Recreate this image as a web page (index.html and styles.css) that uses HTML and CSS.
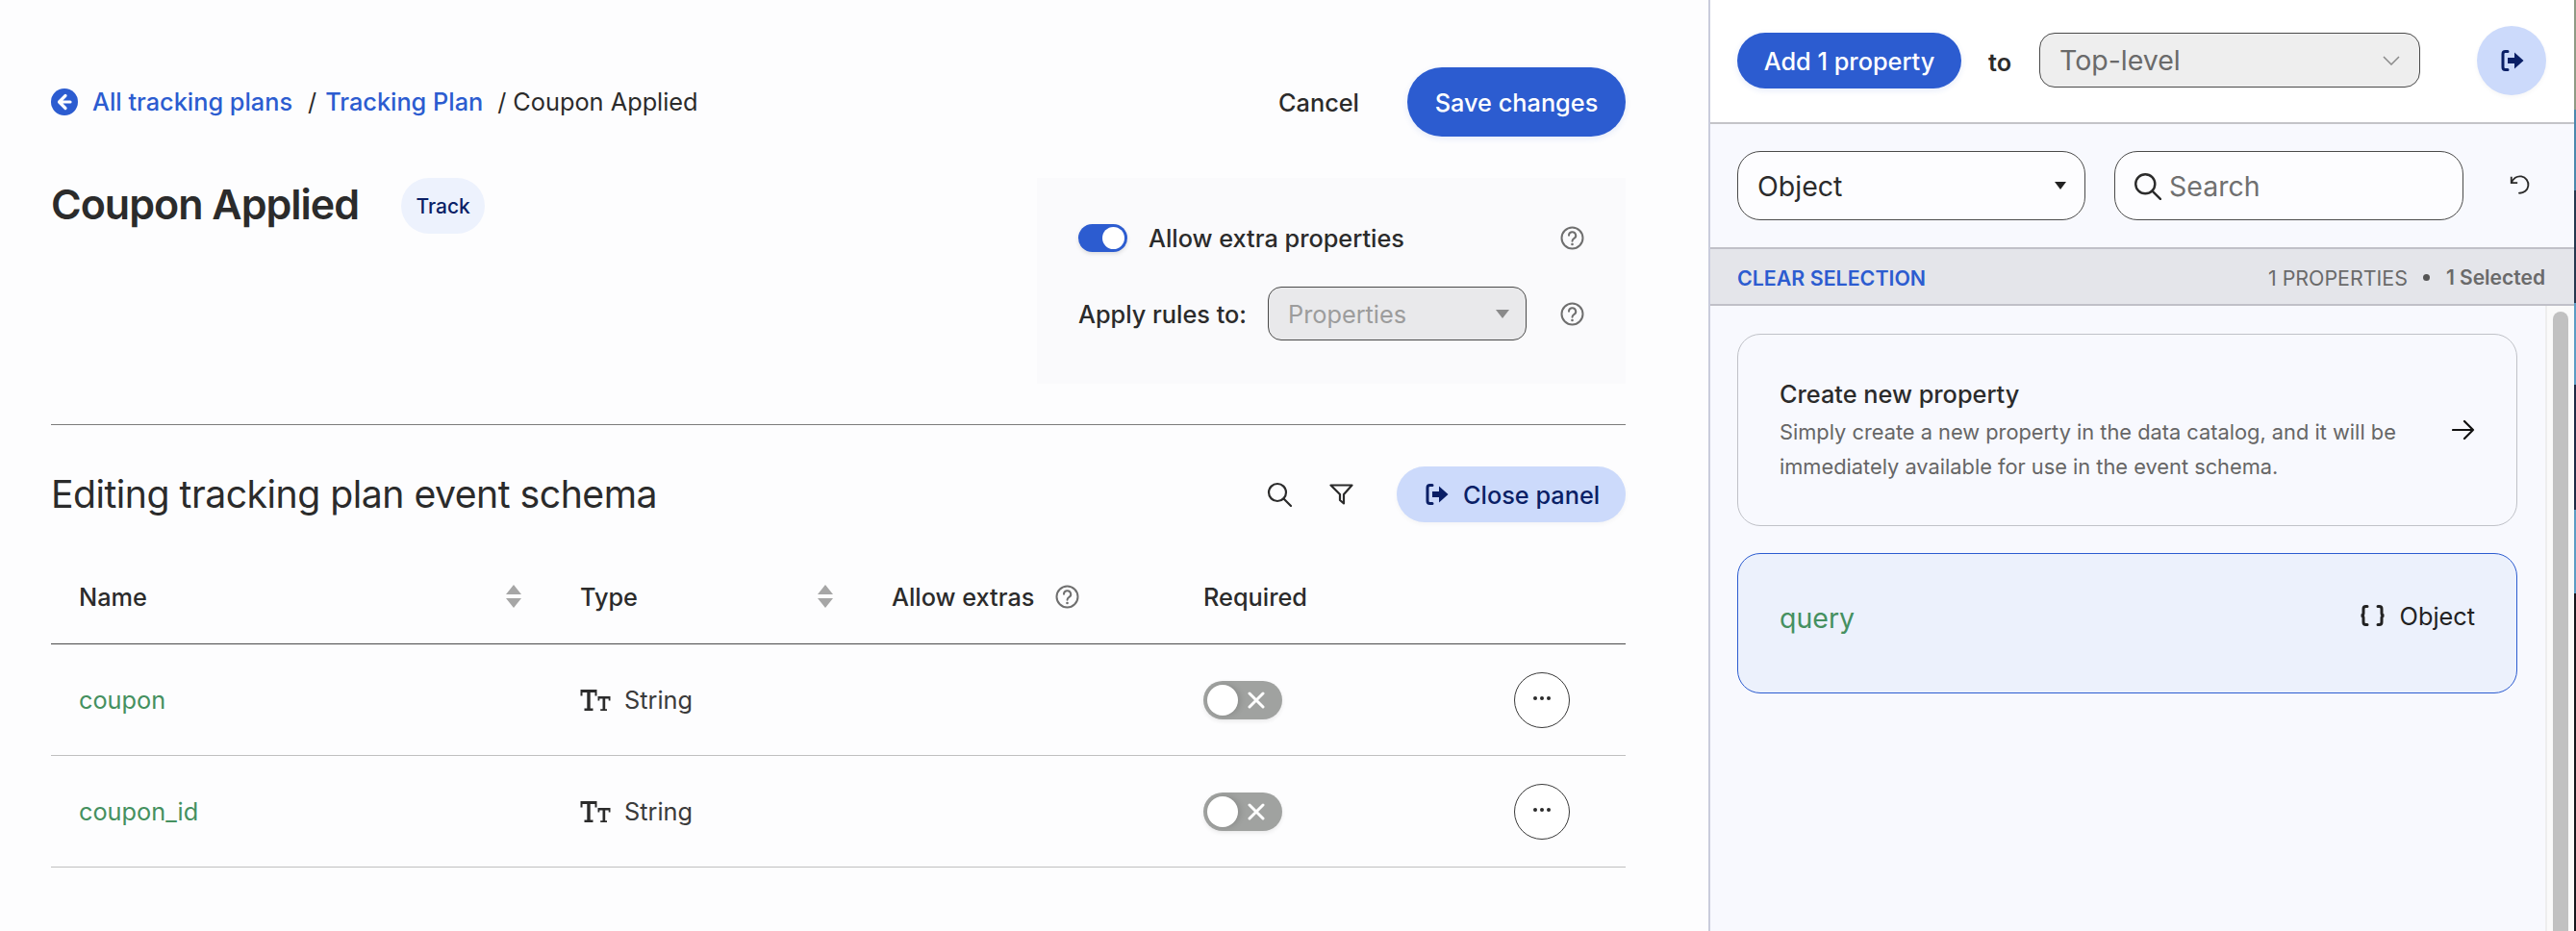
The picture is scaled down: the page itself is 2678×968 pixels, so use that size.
FILE: index.html
```html
<!DOCTYPE html>
<html lang="en">
<head>
<meta charset="utf-8">
<title>Coupon Applied</title>
<link rel="stylesheet" href="styles.css">
</head>
<body>
<svg class="defs" width="0" height="0" aria-hidden="true">
  <symbol id="i-exit" viewBox="0 0 26 26">
    <path d="M9 3.500H6.500A2.500 2.500 0 0 0 4 6v14a2.500 2.500 0 0 0 2.500 2.500H9" fill="none" stroke="currentColor" stroke-width="3" stroke-linecap="round"/>
    <path d="M9 10h7V4.500l9.500 8.500-9.500 8.500V16H9z" fill="currentColor"/>
  </symbol>
  <symbol id="i-help" viewBox="0 0 25 25">
    <circle cx="12.500" cy="12.500" r="11" fill="none" stroke="#6f6f6f" stroke-width="2"/>
    <path d="M9 9.800a3.600 3.600 0 1 1 5.400 3.100c-1.300.8-1.900 1.400-1.900 2.800" fill="none" stroke="#6f6f6f" stroke-width="2" stroke-linecap="round"/>
    <circle cx="12.500" cy="19" r="1.300" fill="#6f6f6f"/>
  </symbol>
  <symbol id="i-search" viewBox="0 0 26 26">
    <circle cx="11" cy="11" r="9" fill="none" stroke="currentColor" stroke-width="2.200"/>
    <path d="M17.500 17.500 25 25" fill="none" stroke="currentColor" stroke-width="2.200" stroke-linecap="round"/>
  </symbol>
  <symbol id="i-sort" viewBox="0 0 16 24">
    <path d="M8 0l8 10H0zM0 14h16L8 24z" fill="#a6a6a6"/>
  </symbol>
  <symbol id="i-type" viewBox="0 0 32 24">
    <path d="M.5 1h17v6.500h-2V4H10.700v16.500H13.500V23H4.500v-2.500H7.300V4H2.500v3.500h-2z" fill="currentColor"/>
    <path d="M18.500 8h13v4.500h-1.800V10.500h-3.500v10.700H28V23h-6.800v-1.800H23.500V10.500h-3.200v2h-1.800z" fill="currentColor"/>
  </symbol>
  <symbol id="i-x" viewBox="0 0 18 18">
    <path d="M2 2l14 14M16 2 2 16" fill="none" stroke="#fff" stroke-width="3" stroke-linecap="round"/>
  </symbol>
</svg>

<main class="main">
  <header class="topbar">
    <nav class="crumbs">
      <svg class="back" viewBox="0 0 28 28" aria-hidden="true"><circle cx="14" cy="14" r="14" fill="#2c5cd0"/><path d="M15 7.500 8.500 14l6.500 6.500M9 14h11" fill="none" stroke="#fff" stroke-width="3.200" stroke-linecap="round" stroke-linejoin="round"/></svg>
      <a class="crumb-link">All tracking plans</a>
      <span class="sep">/</span>
      <a class="crumb-link">Tracking Plan</a>
      <span class="sep sep-last">/</span>
      <span class="crumb-cur">Coupon Applied</span>
    </nav>
    <div class="top-actions">
      <button class="btn-text">Cancel</button>
      <button class="btn-primary btn-save">Save changes</button>
    </div>
  </header>

  <section class="summary">
    <div class="title-wrap">
      <h1 class="title">Coupon Applied</h1>
      <span class="badge">Track</span>
    </div>
    <div class="rules">
      <div class="rule-row">
        <span class="switch-on"><span class="knob-on"></span></span>
        <span class="rule-label">Allow extra properties</span>
        <svg class="help push"><use href="#i-help"/></svg>
      </div>
      <div class="rule-row rule-row-select">
        <span class="apply-label">Apply rules to:</span>
        <div class="select-small"><span>Properties</span><span class="caret-grey"></span></div>
        <svg class="help push"><use href="#i-help"/></svg>
      </div>
    </div>
  </section>

  <hr class="divider">

  <section class="schema-head">
    <h2 class="schema-title">Editing tracking plan event schema</h2>
    <div class="schema-tools">
      <svg class="tool-search"><use href="#i-search"/></svg>
      <svg class="tool-filter" viewBox="0 0 25 22" aria-hidden="true"><path d="M1.500 1.500h22L15 11v9.500l-4-3.500v-6z" fill="none" stroke="currentColor" stroke-width="2.200" stroke-linejoin="round"/></svg>
      <button class="btn-close"><svg class="exit-icon"><use href="#i-exit"/></svg>Close panel</button>
    </div>
  </section>

  <div class="table">
    <div class="row row-head">
      <div class="cell">Name<svg class="sort"><use href="#i-sort"/></svg></div>
      <div class="cell">Type<svg class="sort"><use href="#i-sort"/></svg></div>
      <div class="cell cell-gap">Allow extras<svg class="help"><use href="#i-help"/></svg></div>
      <div class="cell">Required</div>
      <div class="cell"></div>
    </div>
    <div class="row">
      <div class="cell name">coupon</div>
      <div class="cell type"><svg class="type-icon"><use href="#i-type"/></svg>String</div>
      <div class="cell"></div>
      <div class="cell"><span class="switch-off"><span class="knob-off"></span><svg class="x"><use href="#i-x"/></svg></span></div>
      <div class="cell"><button class="more"><span></span><span></span><span></span></button></div>
    </div>
    <div class="row">
      <div class="cell name">coupon_id</div>
      <div class="cell type"><svg class="type-icon"><use href="#i-type"/></svg>String</div>
      <div class="cell"></div>
      <div class="cell"><span class="switch-off"><span class="knob-off"></span><svg class="x"><use href="#i-x"/></svg></span></div>
      <div class="cell"><button class="more"><span></span><span></span><span></span></button></div>
    </div>
  </div>
</main>

<aside class="panel">
  <div class="panel-top">
    <button class="btn-primary btn-add">Add 1 property</button>
    <span class="to">to</span>
    <div class="select-top"><span>Top-level</span><svg class="chev" viewBox="0 0 18 10" aria-hidden="true"><path d="M1 1l8 8 8-8" fill="none" stroke="#8a8a8a" stroke-width="1.500"/></svg></div>
    <button class="btn-round"><svg class="exit-icon"><use href="#i-exit"/></svg></button>
  </div>
  <div class="filters">
    <div class="field"><span class="field-value">Object</span><span class="caret-dark"></span></div>
    <div class="field field-search"><svg class="field-icon"><use href="#i-search"/></svg><span class="placeholder">Search</span></div>
    <svg class="reset" viewBox="0 0 24 24" aria-hidden="true"><path d="M3 3v7h7" fill="none" stroke="currentColor" stroke-width="2"/><path d="M3.500 10A9.500 9.500 0 1 1 12 21.500" fill="none" stroke="currentColor" stroke-width="2" stroke-linecap="round"/></svg>
  </div>
  <div class="selbar">
    <a class="clear">CLEAR SELECTION</a>
    <div class="counts"><span>1 PROPERTIES</span><span class="dot"></span><strong>1 Selected</strong></div>
  </div>
  <div class="list-wrap">
    <div class="list">
      <div class="card card-new">
        <div class="card-text">
          <div class="card-title">Create new property</div>
          <p class="card-desc">Simply create a new property in the data catalog, and it will be immediately available for use in the event schema.</p>
        </div>
        <svg class="arrow" viewBox="0 0 24 24" aria-hidden="true"><path d="M1 12h21M13 3l9 9-9 9" fill="none" stroke="currentColor" stroke-width="2.200" stroke-linecap="round" stroke-linejoin="round"/></svg>
      </div>
      <div class="card card-sel">
        <span class="prop-name">query</span>
        <span class="prop-type"><svg class="braces" viewBox="0 0 27 22" aria-hidden="true"><path d="M8 1.500H6.500A2.500 2.500 0 0 0 4 4v4.500A2.500 2.500 0 0 1 1.500 11 2.500 2.500 0 0 1 4 13.500V18a2.500 2.500 0 0 0 2.500 2.500H8M19 1.500h1.500A2.500 2.500 0 0 1 23 4v4.500a2.500 2.500 0 0 0 2.500 2.500 2.500 2.500 0 0 0-2.500 2.500V18a2.500 2.500 0 0 1-2.500 2.500H19" fill="none" stroke="currentColor" stroke-width="3" stroke-linecap="round"/></svg>Object</span>
      </div>
    </div>
    <div class="scroll"><div class="thumb"></div></div>
  </div>
</aside>
<div class="edge"></div>
</body>
</html>
```
FILE: styles.css
```css
* { box-sizing: border-box; }
html, body { margin: 0; height: 968px; overflow: hidden; }
body {
  display: flex;
  background: #fdfdfe;
  color: #2b2b2b;
  font-family: Inter, "Liberation Sans", sans-serif;
  font-size: 25.300px;
}
.defs { position: absolute; }
button { font: inherit; border: 0; background: none; padding: 0; color: inherit; }
h1, h2, p { margin: 0; }

.main { width: 1776px; flex: none; padding: 70px 86px 0 53px; }

.topbar { display: flex; justify-content: space-between; align-items: center; height: 72px; }
.crumbs { display: flex; align-items: center; font-weight: 500; padding-bottom: 1px; }
.back { width: 28px; height: 28px; margin-right: 15px; }
.crumb-link { color: #2c5cd0; }
.sep { margin: 0 9px 0 16px; font-weight: 400; }
.sep-last { margin: 0 7px 0 15px; }
.crumb-cur { font-weight: 400; }
.top-actions { display: flex; align-items: center; gap: 50px; }
.btn-text { font-weight: 500; }
.btn-primary { background: #2c5cd0; color: #fff; font-weight: 500; box-shadow: 0 2px 6px rgba(44, 92, 208, .12); }
.btn-save { width: 227px; height: 72px; border-radius: 36px; }

.summary { display: flex; justify-content: space-between; margin-top: 43px; height: 214px; }
.title-wrap { display: flex; align-items: flex-start; gap: 44px; }
.title { font-size: 43px; font-weight: 600; line-height: 58px; letter-spacing: -1px; margin-top: -2px; }
.badge { display: flex; align-items: center; justify-content: center; width: 87px; height: 58px; border-radius: 29px; background: #edf2fd; color: #0a1f66; font-size: 21px; font-weight: 500; }

.rules { width: 612px; background: #fafafc; padding: 48px 43px 0; display: flex; flex-direction: column; gap: 36px; }
.rule-row { display: flex; align-items: center; height: 29px; }
.rule-row-select { height: 56px; }
.switch-on { width: 51px; height: 29px; border-radius: 15px; background: #2c5cd0; padding: 3px 3px 3px 25px; margin-right: 22px; box-shadow: 0 2px 4px rgba(0, 0, 0, .12); }
.knob-on { display: block; width: 23px; height: 23px; border-radius: 50%; background: #fff; }
.rule-label { font-weight: 500; }
.help { width: 25px; height: 25px; flex: none; }
.push { margin-left: auto; }
.apply-label { font-weight: 500; margin-right: 22px; }
.select-small { width: 269px; height: 56px; border: 1.500px solid #4a4a4a; border-radius: 14px; background: #e9e9eb; color: #9c9c9c; padding: 0 17px 0 20px; display: flex; align-items: center; justify-content: space-between; }
.caret-grey { width: 0; height: 0; border: 7px solid transparent; border-top: 9px solid #8a8a8a; border-bottom: 0; }

.divider { margin: 42px 0 0; border: 0; height: 1px; background: #7c7c7c; }

.schema-head { display: flex; justify-content: space-between; align-items: center; margin-top: 43px; height: 58px; }
.schema-title { font-size: 39.200px; font-weight: 400; letter-spacing: -.5px; padding-bottom: 2px; }
.schema-tools { display: flex; align-items: center; }
.tool-search { width: 26px; height: 26px; margin-right: 39px; color: #2b2b2b; }
.tool-filter { width: 25px; height: 22px; margin-right: 45px; color: #2b2b2b; }
.btn-close { width: 238px; height: 58px; border-radius: 29px; background: #ccdafb; color: #0a1f66; font-weight: 500; display: flex; align-items: center; padding-left: 28px; gap: 15px; box-shadow: 0 2px 5px rgba(0, 0, 0, .04); }
.exit-icon { width: 26px; height: 26px; color: #0a1f66; flex: none; }

.row { display: grid; grid-template-columns: 521px 324px 324px 323px 145px; height: 116px; padding-left: 29px; border-bottom: 1px solid #c0c0c0; align-items: center; }
.row-head { height: 127px; padding-top: 28px; border-bottom: 1.500px solid #4a4a4a; font-weight: 500; }
.cell { display: flex; align-items: center; }
.row-head .cell { height: 30px; }
.sort { width: 16px; height: 24px; margin-left: auto; margin-right: 61px; }
.cell-gap { gap: 22px; }
.name { color: #459060; }
.type { color: #3b3b3b; }
.type-icon { width: 32px; height: 24px; margin-right: 14px; color: #2b2b2b; }
.switch-off { width: 82px; height: 40px; border-radius: 20px; background: #a0a2a0; padding: 4px; display: flex; align-items: center; box-shadow: 0 2px 4px rgba(0, 0, 0, .08); }
.knob-off { width: 32px; height: 32px; border-radius: 50%; background: #fff; box-shadow: 2px 0 6px rgba(0, 0, 0, .15); }
.x { width: 18px; height: 18px; margin-left: 10px; }
.more { width: 58px; height: 58px; border: 1.500px solid #3a3a3a; border-radius: 50%; display: flex; align-items: center; justify-content: center; gap: 2.500px; background: #fff; padding-bottom: 3px; }
.more span { width: 4.500px; height: 4.500px; border-radius: 50%; background: #2b2b2b; }

.panel { flex: 1; height: 968px; border-left: 2px solid #c9ccdc; background: #f8f9fe; display: flex; flex-direction: column; }
.panel-top { height: 129px; background: #fff; border-bottom: 2px solid #c4c4c8; display: flex; align-items: flex-start; padding: 34px 0 0 28px; flex: none; }
.btn-add { width: 233px; height: 58px; border-radius: 29px; }
.to { width: 24px; margin: 15px 29px 0 28px; font-weight: 600; }
.select-top { width: 396px; height: 57px; border: 1.500px solid #4a4a4a; border-radius: 16px; background: #eeeeee; color: #6a6a6a; font-size: 28.500px; padding: 0 20px; display: flex; align-items: center; justify-content: space-between; }
.chev { width: 18px; height: 10px; }
.btn-round { width: 72px; height: 72px; margin: -7px 0 0 59px; border-radius: 50%; background: #ccdafb; display: flex; align-items: center; justify-content: center; box-shadow: 0 2px 5px rgba(0, 0, 0, .04); }

.filters { height: 130px; flex: none; display: flex; align-items: flex-start; padding: 28px 0 0 28px; border-bottom: 2px solid #c0c0c8; }
.field { width: 362px; height: 72px; border: 1.500px solid #4a4a4a; border-radius: 24px; background: #fdfdff; display: flex; align-items: center; font-size: 28.500px; padding: 0 20px; margin-right: 30px; }
.field-value { flex: 1; }
.caret-dark { width: 0; height: 0; border: 6.500px solid transparent; border-top: 8px solid #222; border-bottom: 0; margin-right: -1px; }
.field-search { width: 363px; padding-left: 19px; margin-right: 31px; }
.field-icon { width: 29px; height: 29px; margin-right: 8px; color: #2b2b2b; flex: none; }
.placeholder { color: #707070; }
.reset { width: 22px; height: 22px; margin: 24px 0 0 16px; color: #2b2b2b; }

.selbar { height: 59px; flex: none; background: #e4e5ea; border-bottom: 2px solid #c0c0c8; display: flex; align-items: center; justify-content: space-between; padding: 2px 30px 0 28px; font-size: 21.400px; }
.clear { color: #2c5cd0; font-weight: 600; }
.counts { display: flex; align-items: center; color: #6a6a6a; }
.dot { width: 7px; height: 7px; border-radius: 50%; background: #555; margin: 0 17px 0 16px; }
.counts strong { font-weight: 600; font-size: 21px; }

.list-wrap { flex: 1; min-height: 0; display: flex; }
.list { flex: 1; padding: 29px 29px 0 28px; display: flex; flex-direction: column; gap: 28px; }
.card { width: 811px; border-radius: 24px; display: flex; padding: 0 43px 0 43px; }
.card-new { height: 200px; border: 1.500px solid #c0c2c8; align-items: center; justify-content: space-between; padding-top: 3.500px; }
.card-title { font-size: 25.300px; font-weight: 500; line-height: 32px; margin-bottom: 5px; }
.card-desc { font-size: 21.800px; line-height: 36px; color: #666; width: 670px; }
.arrow { width: 24px; height: 24px; color: #111; margin-bottom: 4px; }
.card-sel { height: 146px; border: 1.500px solid #2c5cd0; background: #ecf1fc; justify-content: space-between; align-items: flex-start; padding-top: 47px; }
.prop-name { font-size: 28.500px; color: #459060; line-height: 40px; }
.prop-type { display: flex; align-items: center; gap: 15px; line-height: 34px; color: #222; margin-top: 1px; }
.braces { width: 27px; height: 22px; flex: none; margin-bottom: 2px; }

.scroll { width: 30px; flex: none; background: #fafafa; border-left: 2px solid #eee; padding: 6px 6px 0; }
.thumb { width: 16px; height: 100%; border-radius: 8px 8px 0 0; background: #c1c1c1; }

.edge { width: 2px; flex: none; background: linear-gradient(#8f9a85 0 114px, #4c88ad 114px 198px, #26384f 198px 315px, #5c9cc4 315px 400px, #1e2a44 400px 530px, #5c9cc4 530px 617px, #16161c 617px); }
```
